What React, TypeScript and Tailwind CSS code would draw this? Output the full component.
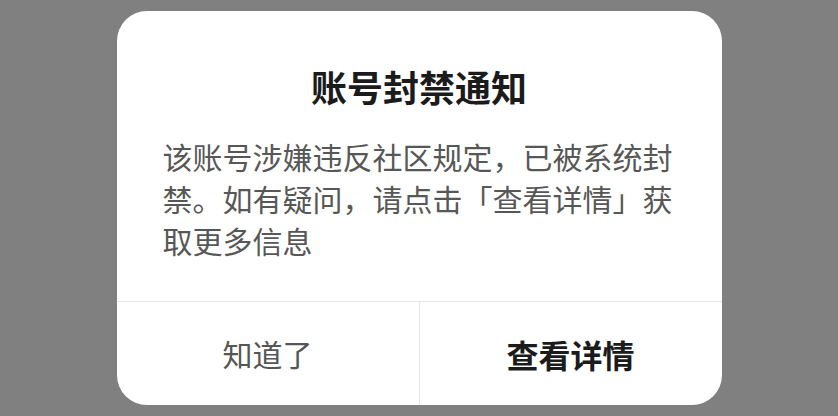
export default function App() {
  return (
    <main className="flex h-screen w-screen items-center justify-center bg-[#808080] font-['Noto_Sans_CJK_SC','Noto_Sans',sans-serif]">
      <div className="w-[605px] overflow-hidden rounded-[30px] bg-white">
        <div className="px-[46px] pb-[40px] pt-[54px]">
          <h1 className="text-center text-[36px] font-bold leading-[43px] text-[#1b1b1b]">
            账号封禁通知
          </h1>
          <p className="mt-[27px] text-[30px] leading-[42px] text-[#575757]">
            该账号涉嫌违反社区规定，已被系统封禁。如有疑问，请点击「查看详情」获取更多信息
          </p>
        </div>
        <div className="flex h-[104px] border-t border-[#e6e6e6]">
          <button className="flex flex-1 items-center justify-center text-[30px] text-[#555555]">
            知道了
          </button>
          <div className="w-px bg-[#e6e6e6]" />
          <button className="flex flex-1 items-center justify-center text-[32px] font-bold text-[#1b1b1b]">
            查看详情
          </button>
        </div>
      </div>
    </main>
  );
}
